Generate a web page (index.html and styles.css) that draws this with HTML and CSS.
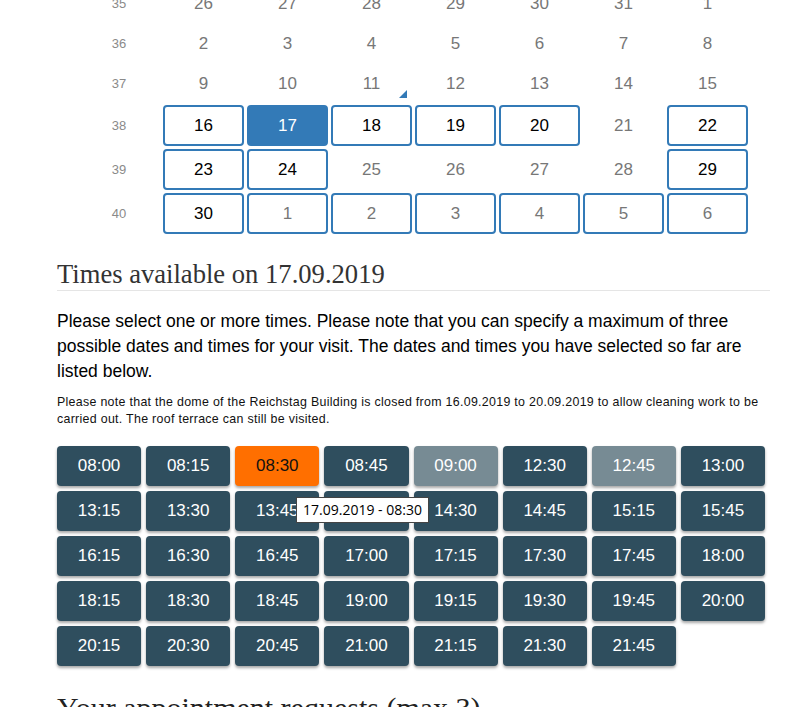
FILE: index.html
```html
<!DOCTYPE html>
<html lang="en">
<head>
<meta charset="utf-8">
<title>Times available</title>
<link rel="stylesheet" href="styles.css">
</head>
<body>
<div class="page">
  <div class="calendar">
    <div class="wk">35</div>
    <div class="day">26</div><div class="day">27</div><div class="day">28</div><div class="day">29</div><div class="day">30</div><div class="day">31</div><div class="day">1</div>
    <div class="wk">36</div>
    <div class="day">2</div><div class="day">3</div><div class="day">4</div><div class="day">5</div><div class="day">6</div><div class="day">7</div><div class="day">8</div>
    <div class="wk">37</div>
    <div class="day">9</div><div class="day">10</div><div class="day today">11</div><div class="day">12</div><div class="day">13</div><div class="day">14</div><div class="day">15</div>
    <div class="wk tall">38</div>
    <div class="day avail">16</div><div class="day avail selected">17</div><div class="day avail">18</div><div class="day avail">19</div><div class="day avail">20</div><div class="day">21</div><div class="day avail">22</div>
    <div class="wk tall">39</div>
    <div class="day avail">23</div><div class="day avail">24</div><div class="day">25</div><div class="day">26</div><div class="day">27</div><div class="day">28</div><div class="day avail">29</div>
    <div class="wk tall">40</div>
    <div class="day avail">30</div><div class="day next">1</div><div class="day next">2</div><div class="day next">3</div><div class="day next">4</div><div class="day next">5</div><div class="day next">6</div>
  </div>

  <h2 class="title">Times available on 17.09.2019</h2>
  <p class="lead">Please select one or more times. Please note that you can specify a maximum of three possible dates and times for your visit. The dates and times you have selected so far are listed below.</p>
  <p class="note">Please note that the dome of the Reichstag Building is closed from 16.09.2019 to 20.09.2019 to allow cleaning work to be carried out. The roof terrace can still be visited.</p>

  <div class="times">
    <button class="t">08:00</button>
    <button class="t">08:15</button>
    <button class="t active">08:30</button>
    <button class="t">08:45</button>
    <button class="t muted">09:00</button>
    <button class="t">12:30</button>
    <button class="t muted">12:45</button>
    <button class="t">13:00</button>
    <button class="t">13:15</button>
    <button class="t">13:30</button>
    <button class="t">13:45</button>
    <button class="t">14:00</button>
    <button class="t">14:30</button>
    <button class="t">14:45</button>
    <button class="t">15:15</button>
    <button class="t">15:45</button>
    <button class="t">16:15</button>
    <button class="t">16:30</button>
    <button class="t">16:45</button>
    <button class="t">17:00</button>
    <button class="t">17:15</button>
    <button class="t">17:30</button>
    <button class="t">17:45</button>
    <button class="t">18:00</button>
    <button class="t">18:15</button>
    <button class="t">18:30</button>
    <button class="t">18:45</button>
    <button class="t">19:00</button>
    <button class="t">19:15</button>
    <button class="t">19:30</button>
    <button class="t">19:45</button>
    <button class="t">20:00</button>
    <button class="t">20:15</button>
    <button class="t">20:30</button>
    <button class="t">20:45</button>
    <button class="t">21:00</button>
    <button class="t">21:15</button>
    <button class="t">21:30</button>
    <button class="t">21:45</button>
    <div class="tooltip">17.09.2019 - 08:30</div>
  </div>

  <h2 class="title big">Your appointment requests (max 3)</h2>
</div>
</body>
</html>
```

FILE: styles.css
```css
html, body {
  margin: 0;
  padding: 0;
  background: #fff;
  overflow: hidden;
}

.page {
  width: 713px;
  margin-left: 57px;
  font-family: "Liberation Sans", Arial, sans-serif;
  color: #111;
}

.calendar {
  display: grid;
  grid-template-columns: 78px repeat(7, 81px);
  column-gap: 3px;
  row-gap: 3px;
  margin-top: -15px;
  margin-left: 25px;
  align-items: center;
}

.wk {
  height: 37px;
  line-height: 37px;
  text-align: center;
  padding-right: 4px;
  font-size: 13px;
  color: #8a8a8a;
}

.wk.tall {
  height: 41px;
  line-height: 41px;
}

.day {
  position: relative;
  height: 37px;
  line-height: 37px;
  text-align: center;
  font-size: 17px;
  color: #777;
  box-sizing: border-box;
}

.day.avail,
.day.next {
  height: 41px;
  line-height: 37px;
  border: 2px solid #337ab7;
  border-radius: 4px;
}

.day.avail {
  color: #000;
}

.day.selected {
  background: #337ab7;
  color: #fff;
}

.day.today::after {
  content: "";
  position: absolute;
  right: 5px;
  bottom: 4px;
  width: 0;
  height: 0;
  border-left: 8px solid transparent;
  border-bottom: 8px solid #337ab7;
}

.title {
  font-family: "Liberation Serif", "Times New Roman", serif;
  font-weight: normal;
  font-size: 26.6px;
  line-height: 30px;
  color: #333;
  margin: 25px 0 0;
  padding-bottom: 1px;
  border-bottom: 1px solid #e5e5e5;
}

.lead {
  font-size: 17.5px;
  line-height: 25px;
  margin: 18px 0 0;
  color: #000;
}

.note {
  font-size: 12.4px;
  line-height: 17px;
  margin: 10px 0 0;
  color: #111;
  letter-spacing: 0.3px;
}

.times {
  position: relative;
  width: 708px;
  display: grid;
  grid-template-columns: repeat(8, 1fr);
  column-gap: 5px;
  row-gap: 5px;
  margin-top: 18px;
}

.t {
  height: 40px;
  border: none;
  border-radius: 4px;
  background: #2f4e5e;
  color: #fff;
  font-family: "Liberation Sans", Arial, sans-serif;
  font-size: 17px;
  padding: 0;
  box-shadow: 0 2px 3px rgba(0, 0, 0, 0.35);
}

.t.muted {
  background: #778b94;
}

.t.active {
  background: #ff6f00;
  color: #111;
}

.tooltip {
  position: absolute;
  left: 239px;
  top: 51px;
  width: 133px;
  height: 26px;
  box-sizing: border-box;
  border: 1px solid #444;
  background: #fff;
  color: #000;
  font-family: "Open Sans", sans-serif;
  font-size: 14px;
  line-height: 24px;
  text-align: center;
  z-index: 2;
}

.title.big {
  font-size: 30px;
  line-height: 34px;
  color: #222;
  border-bottom: none;
  margin-top: 25px;
}
```
